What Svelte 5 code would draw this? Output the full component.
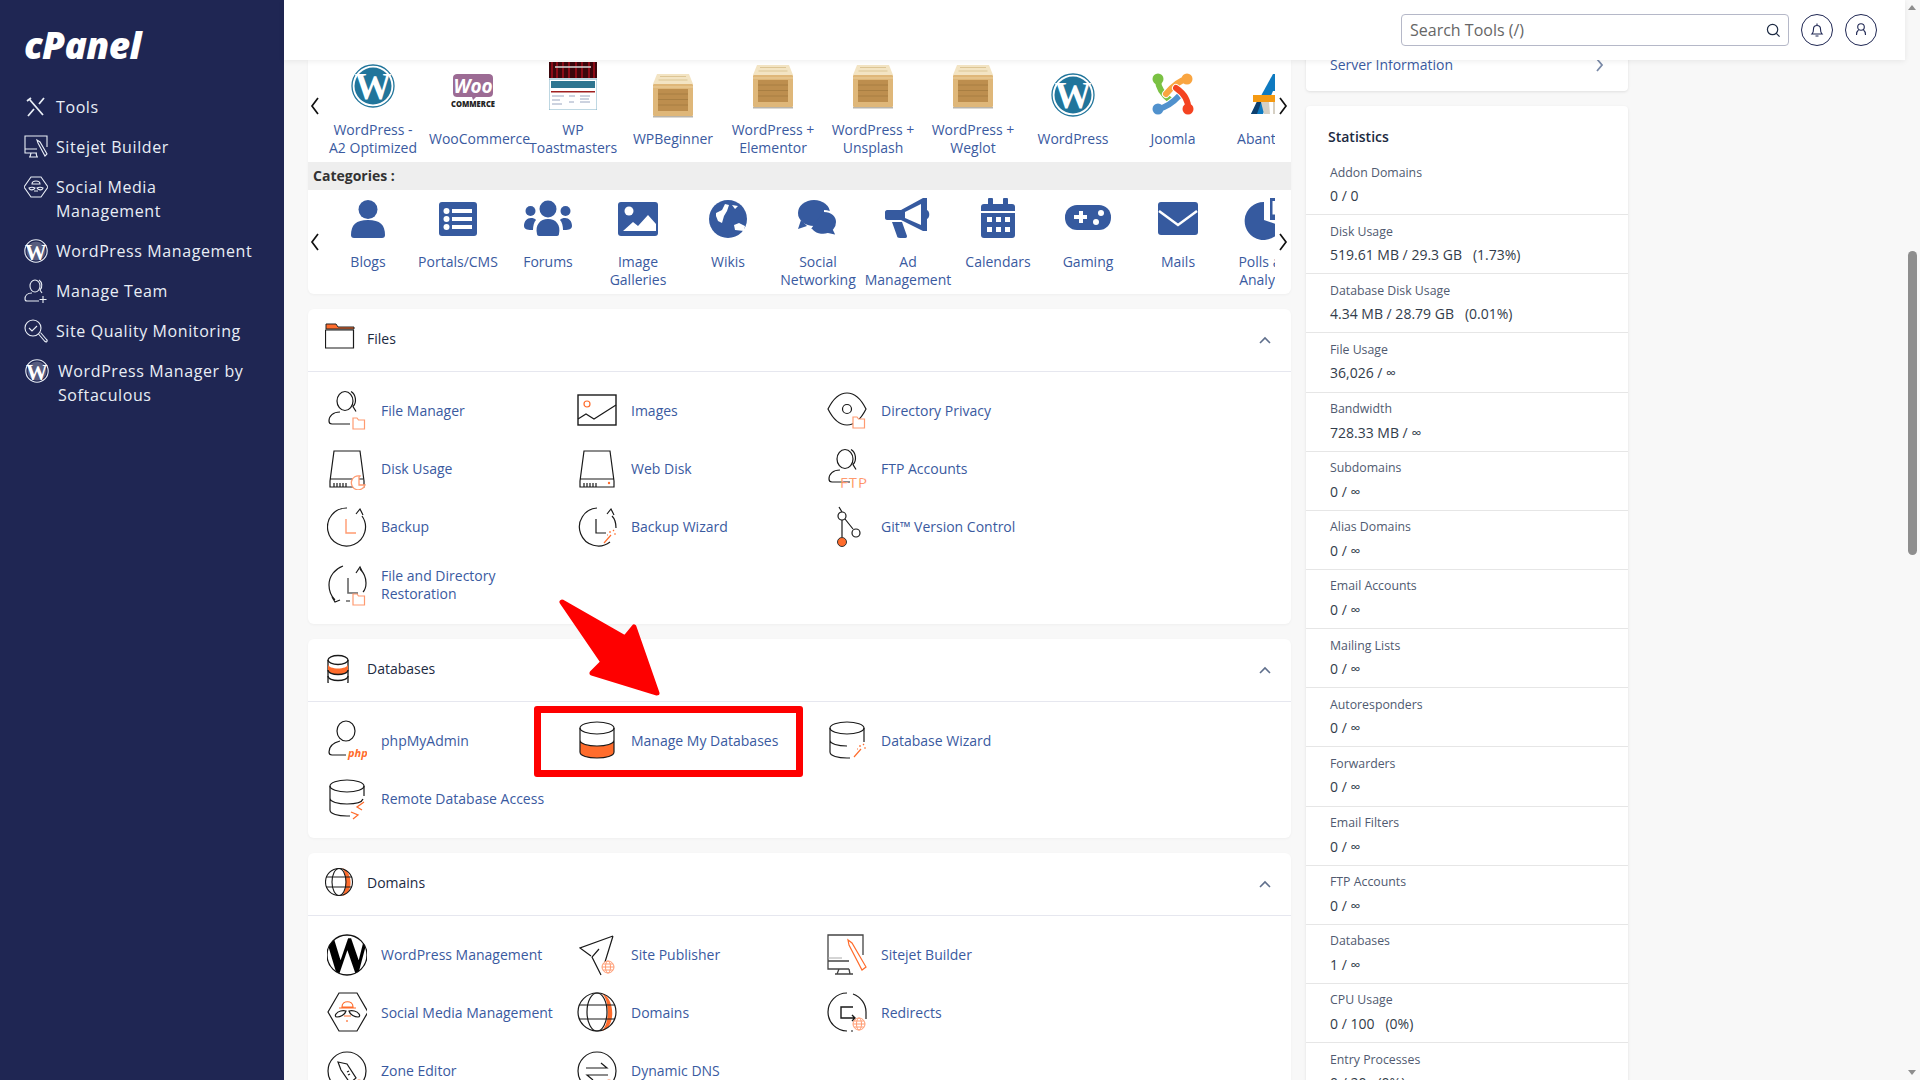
<script>
  const O = "#ff6c2c";
  const P = "#ff9a70";
  const K = 'stroke="#1a1a1a" stroke-width="1.2" fill="none"';

  const folderMini = (x, y) =>
    `<path d="M${x} ${y}h4l1.5 2h6v9h-11.500z" stroke="${P}" stroke-width="1.2" fill="#fff"/>`;
  const globeMini = (x, y) =>
    `<g stroke="${P}" stroke-width="1" fill="#fff"><circle cx="${x}" cy="${y}" r="6"/><ellipse cx="${x}" cy="${y}" rx="2.500" ry="6"/><path d="M${x - 6} ${y}h12M${x - 5} ${y - 3}h10M${x - 5} ${y + 3}h10"/></g>`;
  const person = `<g ${K}><ellipse cx="18" cy="11" rx="8" ry="9.500"/><path d="M24 1.500c5 3 6 11 2 15l3 5M13 22c-7 0-11 4-11 9 0 2 1 3 3 3h18"/></g>`;
  const cylinder = `<g ${K}><ellipse cx="20" cy="8" rx="17" ry="6"/><path d="M3 8v24c0 4 8 6 17 6s17-2 17-6V8M3 20c0 4 8 6 17 6s17-2 17-6"/></g>`;
  const wand = (c) =>
    `<path d="M27 37l7-8" stroke="${c}" stroke-width="1.200"/><path d="M33 25v2M37 28h2M36 24l1 1M30 29h1" stroke="${c}" stroke-width="1.200"/>`;

  const icons = {
    fileManager: person + folderMini(26, 28),
    images: `<g ${K}><rect x="1" y="5" width="38" height="30" stroke-width="1.400"/><path d="M1 29l8-5 8 5 22-14"/></g><circle cx="10" cy="14" r="3" stroke="${O}" stroke-width="1.200" fill="none"/>`,
    privacy: `<g ${K}><path d="M1 19C6 9 13 3 20 3s14 6 19 16c-5 10-12 16-19 16S6 29 1 19z"/><circle cx="20" cy="19" r="4.500"/></g>` + folderMini(26, 27),
    diskUsage: `<g ${K}><path d="M7 3h26l4 30v6H3v-6zM3 31h33M7 35v4M10 35v4M13 35v4M16 35v4M19 35v4"/></g><path d="M33 28a7 7 0 1 0 5 9h-6v-8z" stroke="${P}" stroke-width="1.300" fill="#fff"/>`,
    webDisk: `<g ${K}><path d="M7 3h26l4 30v6H3v-6zM3 31h34M7 35v4M10 35v4M13 35v4M16 35v4M19 35v4"/></g><circle cx="32" cy="35" r="1.200" fill="${O}"/>`,
    ftp: person + `<text x="13" y="40" font-family="Open Sans" font-size="15" letter-spacing="1" fill="${O}" stroke="#fff" stroke-width="0.300">FTP</text>`,
    backup: `<g ${K}><path d="M20 2A19 19 0 1 0 35 10M29 8l4-5 3 6"/></g><path d="M19 13v14h10" stroke="${P}" stroke-width="1.400" fill="none"/>`,
    backupWizard: `<g ${K}><path d="M20 2A19 19 0 1 0 33 36M39 22c0-6-2-10-4-12M30 8l4-5 3 6M19 13v14h10" /></g>` + wand(O),
    git: `<g ${K}><path d="M12 1l3 5M15 14v17M18 13l8 10"/><circle cx="15" cy="10" r="4"/><circle cx="29" cy="27" r="4"/></g><circle cx="15" cy="36" r="4.500" fill="${O}" stroke="#333"/>`,
    restore: `<g ${K}><path d="M16 2C8 5 2 12 2 21c0 6 2 11 6 15M5 33l3 5 5-2M36 28c2-2 3-6 3-9 0-6-3-11-6-14M29 9l4-6 3 6M19 37h4"/></g><path d="M21 14v15h10" stroke="#666" stroke-width="1.600" fill="none"/>` + folderMini(26, 30),
    phpmyadmin: `<g ${K}><ellipse cx="19" cy="11" rx="9" ry="10"/><path d="M13 21c-8 2-11 6-11 11 0 2 1 3 3 3h14"/></g><text x="21" y="37" font-family="Open Sans" font-style="italic" font-weight="700" font-size="11" fill="${O}">php</text>`,
    manageDb: `<path d="M3 20c0 4 8 6 17 6s17-2 17-6v12c0 4-8 6-17 6s-17-2-17-6z" fill="${O}"/>` + cylinder,
    dbWizard: `<g ${K}><ellipse cx="20" cy="8" rx="17" ry="6"/><path d="M3 8v24c0 4 8 6 17 6h3M37 8v14M3 20c0 4 8 6 17 6"/></g>` + wand(O),
    remoteDb: `<g ${K}><ellipse cx="20" cy="8" rx="17" ry="6"/><path d="M3 8v24c0 4 8 6 17 6h3M37 8v10M3 20c0 4 8 6 17 6s15-2 16-5"/></g><path d="M37 24l-7 5 5 3M24 34l7 3-5 4" stroke="${O}" stroke-width="1.300" fill="none"/>`,
    wpBlack: `<clipPath id="wpc"><circle cx="20" cy="21" r="20"/></clipPath><g clip-path="url(#wpc)"><text x="23.500" y="39" text-anchor="middle" font-family="Liberation Serif" font-weight="700" font-size="58" fill="#000" transform="scale(.85 1)">W</text></g><circle cx="20" cy="21" r="20" fill="none" stroke="#111" stroke-width="1.300"/>`,
    publisher: `<g ${K}><path d="M36 2L3 14l11 8M36 2l-8 26M22 15l-7 8 9 18"/></g>` + globeMini(31, 33),
    sitejet: `<g stroke="#444" stroke-width="1.300" fill="none"><path d="M36 21V1H1v34h21M1 27h21M12 35l-2 5M22 35l1 5M8 40h18"/></g><path d="M1 24h14" stroke="#aaa" stroke-width="1"/><path d="M22 11l-1-5 4 3 14 24-4 3z" stroke="${O}" stroke-width="1.200" fill="#fff"/>`,
    social: `<g ${K}><path d="M12 1h18l11 19-11 19H12L1 20z"/><path d="M9 22c2-3 7-4 10-3-1 4-6 6-9 6-2 0-2-2-1-3zM32 22c-2-3-7-4-10-3 1 4 6 6 9 6 2 0 2-2 1-3z"/></g><path d="M15 15c0-7 11-7 11 0zM12 16h17M17 24h7M20 28v2" stroke="${O}" stroke-width="1.200" fill="none"/>`,
    domains: `<path d="M24 1c14 3 16 36 0 38 9-5 9-33 0-38z" fill="${O}"/><g ${K}><circle cx="20" cy="20" r="19"/><ellipse cx="20" cy="20" rx="10" ry="19"/><path d="M2 13h36M2 27h36" /></g>`,
    redirects: `<g ${K}><path d="M20 1a19 19 0 1 0 0 38M26 2c8 3 13 10 13 18v7M24 39h2"/><path d="M26 15H14v11h14M25 23l3 3-3 3" stroke-width="1.400"/></g>` + globeMini(32, 32),
    zone: `<circle cx="20" cy="21" r="19" ${K}/><g ${K}><path d="M11 12l9 2 9 14-6 5-9-13zM11 12l3 8"/><path d="M20 22l2-1M21 25l2-1"/></g>` + globeMini(32, 36),
    ddns: `<circle cx="20" cy="21" r="19" ${K}/><g ${K}><path d="M9 18h21l-6-5M31 25H10l6 5"/></g>` + globeMini(32, 36),
    secFolder: `<path d="M1 6v-5h10l2 3h16v2z" fill="${O}" stroke="#222" stroke-width="1"/><path d="M0.500 7h28v18h-28z" ${K} stroke-width="1.400"/>`,
    secDb: `<g stroke="#1a1a1a" stroke-width="1.300" fill="#fff"><path d="M3 7v22c0 6 20 6 20 0V7"/></g><path d="M3 11c0 6 20 6 20 0v6c0 6-20 6-20 0z" fill="${O}"/><g stroke="#1a1a1a" stroke-width="1.300" fill="none"><ellipse cx="13" cy="7" rx="10" ry="4.500"/><path d="M3 17c0 6 20 6 20 0M3 23c0 6 20 6 20 0"/></g>`,
    secGlobe: `<path d="M17 1c11 3 12 26 0 28 5-5 5-23 0-28z" fill="${O}"/><g stroke="#1a1a1a" stroke-width="1.100" fill="none"><circle cx="14" cy="15" r="13.500"/><ellipse cx="14" cy="15" rx="7" ry="13.500"/><path d="M1 10h26M1 20h26"/></g>`
  };

  const W = "#e9eef6";
  const SW = `stroke="${W}" stroke-width="1.100" fill="none"`;
  const wpNav = `<circle cx="12" cy="12" r="11.200" ${SW}/><circle cx="12" cy="12" r="9.500" fill="#fff" opacity=".25"/><text x="12" y="20.500" text-anchor="middle" font-family="Liberation Serif" font-weight="700" font-size="24" fill="#fff" transform="translate(1.200 0) scale(.9 1)">W</text>`;
  const navIcons = {
    tools: `<g stroke="${W}" stroke-width="1.800" fill="none"><path d="M6 5l13 15M20 3l-5 6M10 14l-6 7M3 6l4-3"/></g>`,
    sitejet: `<g ${SW}><path d="M23 12V1H1v17h12M1 14h12M7 18l-1 4M12 18l1 4M5 22h9"/><path d="M14 8l-1-3 3 2 7 12-2 2z"/></g>`,
    social: `<g ${SW}><path d="M7 2h10l7 10-7 10H7L0 12z"/><path d="M5 13c2-1 4-1 6 0-1 2-5 3-6 0zM19 13c-2-1-4-1-6 0 1 2 5 3 6 0zM8 9c0-4 8-4 8 0zM10 16h4"/></g>`,
    wp: wpNav,
    team: `<g ${SW} stroke-width="1.300"><ellipse cx="11" cy="7" rx="5" ry="6"/><path d="M15 1c3 2 4 7 1 10l2 3M8 14c-5 0-7 3-7 6 0 2 1 2 2 2h12M19 17v7M15.500 20.500h7"/></g>`,
    quality: `<g ${SW} stroke-width="1.300"><circle cx="9" cy="9" r="8"/><path d="M5 9l3 3 5-5M14.500 15l6 7c2 2 3.500 0 2-1.500l-6-7"/></g>`
  };

  const nav = [
    { label: "Tools", icon: "tools" },
    { label: "Sitejet Builder", icon: "sitejet" },
    { label: "Social Media Management", icon: "social" },
    { label: "WordPress Management", icon: "wp" },
    { label: "Manage Team", icon: "team" },
    { label: "Site Quality Monitoring", icon: "quality" },
    { label: "WordPress Manager by Softaculous", icon: "wp", shift: true }
  ];

  const scripts = [
    { name: "WordPress - A2 Optimized", art: "wp" },
    { name: "WooCommerce", art: "woo" },
    { name: "WP Toastmasters", art: "toast" },
    { name: "WPBeginner", art: "crate" },
    { name: "WordPress + Elementor", art: "crate" },
    { name: "WordPress + Unsplash", art: "crate" },
    { name: "WordPress + Weglot", art: "crate" },
    { name: "WordPress", art: "wp" },
    { name: "Joomla", art: "joomla" },
    { name: "Abantecart", art: "abante" }
  ];

  const categories = [
    { name: "Blogs", svg: `<circle cx="24" cy="11.500" r="9.500"/><path d="M7 37c0-10 5-15 17-15s17 5 17 15c0 2-1 3-3 3H10c-2 0-3-1-3-3z"/>` },
    { name: "Portals/CMS", svg: `<rect x="5" y="4" width="38" height="34" rx="3"/><g fill="#fff"><circle cx="12.500" cy="13" r="3"/><circle cx="12.500" cy="21" r="3"/><circle cx="12.500" cy="29" r="3"/><rect x="18" y="11" width="20" height="4"/><rect x="18" y="19" width="20" height="4"/><rect x="18" y="27" width="20" height="4"/></g>` },
    { name: "Forums", svg: `<circle cx="24" cy="11" r="8.500"/><path d="M13 36c-2-9 3-15 11-15s13 6 11 15c0 1-1 2-2 2H15c-1 0-2-1-2-2z"/><circle cx="6.500" cy="13" r="5"/><circle cx="41.500" cy="13" r="5"/><path d="M0 28c0-5 3-8 7-8 2 0 4 .500 5 2-2 2-3 6-3 10-4 0-9 0-9-4zM48 28c0-5-3-8-7-8-2 0-4 .500-5 2 2 2 3 6 3 10 4 0 9 0 9-4z"/>` },
    { name: "Image Galleries", svg: `<rect x="4" y="4" width="40" height="34" rx="3"/><circle cx="15" cy="13" r="4.500" fill="#fff"/><path d="M9 33l10-9 5 4 10-11 8 9v7z" fill="#fff"/>` },
    { name: "Wikis", svg: `<circle cx="24" cy="21" r="19"/><path d="M12 15l6-3 3-6 4 1-2 6-3 5-2 7-4-2-2-5zM30 27l5-2 6 3-1 5-9-1zM28 7l6 1-3 3z" fill="#fff"/>` },
    { name: "Social Networking", svg: `<ellipse cx="20" cy="15" rx="16" ry="13"/><path d="M7 22l-3 9 9-3z"/><path d="M30 13c8 0 13 5 13 11 0 4-1 6-3 8l3 6-9-2c-6 2-14 0-17-5" stroke="#fff" stroke-width="2"/>` },
    { name: "Ad Management", svg: `<path d="M3 12h14l22-12h4v33h-4l-22-11v0H3c-1 0-2-1-2-2v-6c0-1 1-2 2-2z"/><path d="M8 24h10l5 14c0 2-1 2-3 2h-4c-2 0-3-1-3-2z"/><path d="M37 6L21 14v6l16 7z" fill="#fff"/><path d="M43 12c3 1 3 8 0 9z"/>` },
    { name: "Calendars", svg: `<rect x="7" y="6" width="34" height="34" rx="3"/><rect x="14" y="0" width="5" height="9" rx="1"/><rect x="29" y="0" width="5" height="9" rx="1"/><path d="M7 14h34" stroke="#fff" stroke-width="2"/><g fill="#fff"><rect x="13" y="19" width="5" height="5"/><rect x="22" y="19" width="5" height="5"/><rect x="31" y="19" width="5" height="5"/><rect x="13" y="29" width="5" height="5"/><rect x="22" y="29" width="5" height="5"/><rect x="31" y="29" width="5" height="5"/></g>` },
    { name: "Gaming", svg: `<rect x="1" y="7" width="46" height="25" rx="12"/><path d="M10 17h5v-4h4v4h4v4h-4v4h-4v-4h-5z" fill="#fff"/><circle cx="37" cy="15" r="3" fill="#fff"/><circle cx="32" cy="24" r="3" fill="#fff"/>` },
    { name: "Mails", svg: `<rect x="4" y="4" width="40" height="33" rx="3"/><path d="M5 13l19 14 19-14" stroke="#fff" stroke-width="2.500" fill="none"/>` },
    { name: "Polls and Analytics", svg: `<path d="M20 4A19 19 0 1 0 38 28L20 22z"/><path d="M26 0h18v22H26z"/><path d="M30 3v12h8" stroke="#fff" stroke-width="3" fill="none"/>` }
  ];

  const sections = [
    {
      title: "Files",
      icon: "secFolder",
      items: [
        ["File Manager", "fileManager"],
        ["Images", "images"],
        ["Directory Privacy", "privacy"],
        ["Disk Usage", "diskUsage"],
        ["Web Disk", "webDisk"],
        ["FTP Accounts", "ftp"],
        ["Backup", "backup"],
        ["Backup Wizard", "backupWizard"],
        ["Git™ Version Control", "git"],
        ["File and Directory Restoration", "restore"]
      ]
    },
    {
      title: "Databases",
      icon: "secDb",
      items: [
        ["phpMyAdmin", "phpmyadmin"],
        ["Manage My Databases", "manageDb"],
        ["Database Wizard", "dbWizard"],
        ["Remote Database Access", "remoteDb"]
      ]
    },
    {
      title: "Domains",
      icon: "secGlobe",
      items: [
        ["WordPress Management", "wpBlack"],
        ["Site Publisher", "publisher"],
        ["Sitejet Builder", "sitejet"],
        ["Social Media Management", "social"],
        ["Domains", "domains"],
        ["Redirects", "redirects"],
        ["Zone Editor", "zone"],
        ["Dynamic DNS", "ddns"]
      ]
    }
  ];

  const stats = [
    ["Addon Domains", "0 / 0"],
    ["Disk Usage", "519.61 MB / 29.3 GB", "(1.73%)"],
    ["Database Disk Usage", "4.34 MB / 28.79 GB", "(0.01%)"],
    ["File Usage", "36,026 / ∞"],
    ["Bandwidth", "728.33 MB / ∞"],
    ["Subdomains", "0 / ∞"],
    ["Alias Domains", "0 / ∞"],
    ["Email Accounts", "0 / ∞"],
    ["Mailing Lists", "0 / ∞"],
    ["Autoresponders", "0 / ∞"],
    ["Forwarders", "0 / ∞"],
    ["Email Filters", "0 / ∞"],
    ["FTP Accounts", "0 / ∞"],
    ["Databases", "1 / ∞"],
    ["CPU Usage", "0 / 100", "(0%)"],
    ["Entry Processes", "0 / 20", "(0%)"]
  ];
</script>

{#snippet chevron(dir)}
  <svg class="arrow {dir}" viewBox="0 0 10 18" width="10" height="18">
    <path d={dir === "prev" ? "M8 1L2 9l6 8" : "M2 1l6 8-6 8"} fill="none" stroke="#111" stroke-width="1.700" />
  </svg>
{/snippet}

{#snippet crate()}
  <svg viewBox="0 0 48 48" width="48" height="48">
    <path d="M8 3h32l4 10H4z" fill="#f3e4c3" />
    <path d="M11 5.500h26M9.500 9h29" stroke="#dcc595" stroke-width="1.200" />
    <rect x="4" y="13" width="40" height="32" rx="1" fill="#dfb779" />
    <rect x="9" y="18" width="30" height="22" fill="#bd8e4e" />
    <path d="M9 23h30M9 28.500h30M9 34h30" stroke="#a87e42" stroke-width="1" />
    <path d="M4 16h40" stroke="#ecd09e" stroke-width="1" />
    <rect x="4" y="45" width="40" height="1.500" fill="#b9b4aa" />
  </svg>
{/snippet}

{#snippet art(name)}
  {#if name === "wp"}
    <svg viewBox="0 0 48 48" width="48" height="48">
      <circle cx="24" cy="24" r="21" fill="#fff" stroke="#21759b" stroke-width="1.300" />
      <circle cx="24" cy="24" r="18.500" fill="#21759b" />
      <text x="24" y="37" text-anchor="middle" font-family="Liberation Serif" font-weight="700" font-size="37" fill="#fff">W</text>
    </svg>
  {:else if name === "woo"}
    <svg viewBox="0 0 48 48" width="48" height="48">
      <path d="M8 3h32c2 0 4 1 4 4v15c0 3-2 4-4 4H27l-3 3-1-3H8c-2 0-4-1-4-4V7c0-3 2-4 4-4z" fill="#9c6b94" />
      <text x="24" y="22" text-anchor="middle" font-family="Open Sans" font-style="italic" font-weight="700" font-size="19" fill="#fff">Woo</text>
      <text x="24" y="36" text-anchor="middle" font-family="Open Sans" font-weight="800" font-size="8.500" textLength="44" lengthAdjust="spacingAndGlyphs" fill="#222">COMMERCE</text>
    </svg>
  {:else if name === "toast"}
    <svg viewBox="0 0 48 48" width="48" height="48">
      <rect width="48" height="16" fill="#3a060c" />
      <path d="M3 0v16M8 0v16M14 0v16M20 0v16M27 0v16M33 0v16M40 0v16M45 0v16" stroke="#a80c1a" stroke-width="1.500" />
      <path d="M6 5h36" stroke="#d8d8d8" stroke-width="1.500" />
      <rect x="0" y="17" width="48" height="31" fill="#fff" stroke="#7fb0c6" stroke-width="1" />
      <rect x="2" y="19" width="44" height="7" fill="#2f7590" />
      <rect x="2" y="29" width="44" height="1.500" fill="#a02020" />
      <path d="M3 34h12M3 38h8M3 42h10M20 34h6M20 40h5M31 34h10M31 37h9M31 40h10" stroke="#9aa6c0" stroke-width="1" />
    </svg>
  {:else if name === "crate"}
    {@render crate()}
  {:else if name === "joomla"}
    <svg viewBox="0 0 48 48" width="48" height="48" fill="none" stroke-linecap="round">
      <path d="M9 9Q9 20 22 30" stroke="#7ac143" stroke-width="6" />
      <circle cx="9" cy="8" r="5.500" fill="#7ac143" />
      <path d="M38 8Q28 10 17 23" stroke="#fff" stroke-width="8" />
      <path d="M38 8Q28 10 17 23" stroke="#f9a541" stroke-width="6" />
      <circle cx="38" cy="8" r="5.500" fill="#f9a541" />
      <path d="M9 38Q20 36 31 24" stroke="#fff" stroke-width="8" />
      <path d="M9 38Q20 36 31 24" stroke="#5091cd" stroke-width="6" />
      <circle cx="9" cy="38" r="5.500" fill="#5091cd" />
      <path d="M27 17Q40 26 39 38" stroke="#fff" stroke-width="8" />
      <path d="M27 17Q40 26 39 38" stroke="#f44321" stroke-width="6" />
      <circle cx="39" cy="38" r="5.500" fill="#f44321" />
    </svg>
  {:else}
    <svg viewBox="0 0 48 48" width="48" height="48">
      <path d="M24 3h19v40H2z" fill="#0f7ac0" />
      <path d="M14 43L24 20h8v23z" fill="#fff" />
      <path d="M2 43l8-17h4L8 43z" fill="#0d3f6e" />
      <rect x="4" y="24" width="40" height="7" fill="#f59a12" />
      <path d="M12 31l3 12h6l-1-12zM24 31v12h7V31z" fill="#d6d0c4" />
    </svg>
  {/if}
{/snippet}

<div class="page">
  <aside class="sidebar">
    <div class="logo">cPanel</div>
    <nav>
      {#each nav as n}
        <div class="nav-item" class:shift={n.shift}>
          <svg viewBox="0 0 24 24" width="24" height="24">{@html navIcons[n.icon]}</svg>
          <span>{n.label}</span>
        </div>
      {/each}
    </nav>
  </aside>

  <div class="main">
    <header>
      <div class="search">
        <span>Search Tools (/)</span>
        <svg viewBox="0 0 16 16" width="15" height="15" fill="none" stroke="#1d2b44" stroke-width="1.300">
          <circle cx="7" cy="7" r="5.500" />
          <path d="M11 11l3.500 3.500" />
        </svg>
      </div>
      <div class="round">
        <svg viewBox="0 0 16 16" width="16" height="16" fill="none" stroke="#1f2753" stroke-width="1.100">
          <path d="M3 12c1-1 1.500-2 1.500-5a3.500 3.500 0 0 1 7 0c0 3 .5 4 1.500 5zM8 1.500v2M6.500 14h3" />
        </svg>
      </div>
      <div class="round">
        <svg viewBox="0 0 16 16" width="16" height="16" fill="none" stroke="#1f2753" stroke-width="1.100">
          <circle cx="8" cy="5" r="3.300" />
          <path d="M5.500 8c-1.500 1-2 3-2 5M10.500 8c1.500 1 2 3 2 5" />
        </svg>
      </div>
    </header>

    <div class="content">
      <section class="left">
        <div class="installer">
          <div class="carousel scripts">
            {@render chevron("prev")}
            <div class="track">
              {#each scripts as s}
                <div class="script">
                  {@render art(s.art)}
                  <span>{s.name}</span>
                </div>
              {/each}
            </div>
            {@render chevron("next")}
          </div>
          <div class="cat-bar">Categories :</div>
          <div class="carousel cats">
            {@render chevron("prev")}
            <div class="track">
              {#each categories as c}
                <div class="cat">
                  <svg viewBox="0 0 48 42" width="48" height="42" fill="#365a9f">{@html c.svg}</svg>
                  <span>{c.name}</span>
                </div>
              {/each}
            </div>
            {@render chevron("next")}
          </div>
        </div>

        {#each sections as sec}
          <div class="card">
            <div class="card-head">
              <svg viewBox="0 0 30 30" width="30" height="30">{@html icons[sec.icon]}</svg>
              <span>{sec.title}</span>
              <svg class="collapse" viewBox="0 0 12 8" width="12" height="8">
                <path d="M1 7l5-5 5 5" fill="none" stroke="#5f6f8c" stroke-width="1.600" />
              </svg>
            </div>
            <div class="card-body">
              {#each sec.items as [label, icon]}
                <div class="tool">
                  <svg viewBox="0 0 40 42" width="40" height="42">{@html icons[icon]}</svg>
                  <span>{label}</span>
                </div>
              {/each}
            </div>
          </div>
        {/each}
      </section>

      <section class="right">
        <div class="panel server">
          <span>Server Information</span>
          <svg viewBox="0 0 8 14" width="8" height="14">
            <path d="M1 1l5 6-5 6" fill="none" stroke="#7a8aa8" stroke-width="1.800" />
          </svg>
        </div>
        <div class="panel">
          <h3>Statistics</h3>
          {#each stats as [label, value, pct]}
            <div class="stat">
              <div class="stat-label">{label}</div>
              <div class="stat-value">{value}{#if pct}<span class="pct">{pct}</span>{/if}</div>
            </div>
          {/each}
        </div>
      </section>
    </div>
  </div>

  <div class="scrollbar">
    <span class="tri up"></span>
    <div class="thumb"></div>
    <span class="tri down"></span>
  </div>

  <!-- annotation drawn over the screenshot -->
  <div class="mark-box"></div>
  <svg class="mark-arrow" viewBox="0 0 110 105" width="110" height="105">
    <path d="M7 7L70 43 79 32 102 98 37 78 48 67z" fill="#fe0000" stroke="#fe0000" stroke-width="5" stroke-linejoin="round" />
  </svg>
</div>

<style>
  :global(body) {
    margin: 0;
    background: #f8f8f8;
    font-family: "Open Sans", "Noto Sans", sans-serif;
  }

  .page {
    position: relative;
    display: flex;
    width: 1920px;
    height: 1080px;
    overflow: hidden;
  }

  .sidebar {
    width: 284px;
    flex: none;
    background: #1f2653;
    color: #e9eef6;
  }

  .logo {
    margin: 23px 0 0 24px;
    height: 46px;
    font-family: "Open Sans", sans-serif;
    font-size: 37px;
    font-weight: 800;
    font-style: italic;
    line-height: 44px;
    letter-spacing: -0.6px;
    color: #fff;
  }

  nav {
    margin-top: 26px;
  }

  .nav-item {
    display: flex;
    gap: 8px;
    padding: 0 24px;
    margin-bottom: 16px;
    font-size: 16px;
    line-height: 24px;
    letter-spacing: 0.6px;
  }

  .nav-item svg {
    flex: none;
  }

  .nav-item.shift {
    padding-left: 25px;
    gap: 9px;
  }

  .main {
    flex: 1;
    min-width: 0;
    display: flex;
    flex-direction: column;
  }

  header {
    position: relative;
    z-index: 2;
    flex: none;
    height: 60px;
    box-sizing: border-box;
    padding: 14px 28px 0 0;
    display: flex;
    justify-content: flex-end;
    gap: 12px;
    background: #fff;
    box-shadow: 0 1px 6px rgba(0, 0, 0, 0.08);
  }

  .search {
    width: 388px;
    height: 32px;
    box-sizing: border-box;
    padding: 0 7px 0 8px;
    display: flex;
    align-items: center;
    justify-content: space-between;
    border: 1px solid #b5b8c8;
    border-radius: 4px;
    font-size: 16px;
    line-height: 26px;
    color: #666;
  }

  .search span {
    margin-top: -1px;
  }

  .round {
    width: 32px;
    height: 32px;
    box-sizing: border-box;
    border: 1px solid #1f2753;
    border-radius: 50%;
    display: flex;
    align-items: center;
    justify-content: center;
  }

  .content {
    flex: 1;
    min-height: 0;
    padding-left: 24px;
    display: flex;
    gap: 15px;
    align-items: flex-start;
  }

  .left {
    width: 983px;
    flex: none;
  }

  .right {
    width: 322px;
    flex: none;
  }

  .installer {
    background: #fff;
    border-radius: 0 0 6px 6px;
    box-shadow: 0 1px 3px rgba(0, 0, 0, 0.04);
    margin-bottom: 15px;
  }

  .carousel {
    position: relative;
    padding-left: 15px;
    padding-right: 16px;
  }

  .track {
    display: flex;
    overflow: hidden;
    height: 100%;
  }

  .scripts {
    height: 102px;
    box-sizing: border-box;
    padding-bottom: 4px;
  }

  .script {
    flex: none;
    width: 100px;
    box-sizing: border-box;
    padding: 0 6px;
    display: flex;
    flex-direction: column;
    align-items: center;
    justify-content: center;
    gap: 11px;
  }

  .script span,
  .cat span {
    align-self: stretch;
    text-align: center;
    font-size: 14px;
    line-height: 18px;
    color: #3a5a9f;
  }

  .script svg {
    flex: none;
  }

  .cat-bar {
    height: 28px;
    padding-left: 5px;
    background: #eee;
    font-size: 14px;
    font-weight: 700;
    line-height: 28px;
    color: #333;
  }

  .cats {
    height: 104px;
  }

  .cat {
    flex: none;
    width: 90px;
    padding-top: 8px;
    box-sizing: border-box;
    display: flex;
    flex-direction: column;
    align-items: center;
    gap: 13px;
  }

  .cat svg {
    flex: none;
  }

  .arrow {
    position: absolute;
    top: 37px;
    z-index: 1;
  }

  .cats .arrow {
    top: 43px;
  }

  .arrow.prev {
    left: 2px;
  }

  .arrow.next {
    right: 3px;
  }

  .card {
    margin-bottom: 15px;
    background: #fff;
    border-radius: 6px;
    box-shadow: 0 1px 3px rgba(0, 0, 0, 0.04);
  }

  .card-head {
    height: 63px;
    box-sizing: border-box;
    padding: 0 20px 4px 17px;
    display: flex;
    align-items: center;
    gap: 12px;
    border-bottom: 1px solid #e6e7ef;
    font-size: 14px;
    color: #1c2a3f;
  }

  .collapse {
    margin-left: auto;
    margin-top: 4px;
  }

  .card-body {
    padding: 10px 0 10px 19px;
    display: grid;
    grid-template-columns: repeat(3, 250px);
    grid-auto-rows: 58px;
  }

  .tool {
    display: flex;
    align-items: center;
    gap: 14px;
    font-size: 14px;
    line-height: 18px;
    color: #3a5a9f;
  }

  .tool svg {
    flex: none;
  }

  .tool span {
    max-width: 190px;
  }

  .panel {
    background: #fff;
    border-radius: 4px;
    box-shadow: 0 1px 3px rgba(0, 0, 0, 0.1);
    margin-bottom: 15px;
  }

  .server {
    margin-top: -9px;
    padding: 5px 24px 17px 24px;
    display: flex;
    align-items: center;
    justify-content: space-between;
    font-size: 14px;
    line-height: 18px;
    color: #3a5a9f;
  }

  h3 {
    margin: 0;
    padding: 22px 0 10px 22px;
    font-size: 14px;
    font-weight: 600;
    line-height: 18px;
    color: #1c2a3f;
  }

  .stat {
    box-sizing: border-box;
    height: 59.15px;
    padding: 7.500px 0 0 24px;
    border-bottom: 1.500px solid #e6e6e6;
  }

  .stat-label {
    font-size: 12.3px;
    line-height: 18px;
    color: #505a70;
  }

  .stat-value {
    margin-top: 5.500px;
    font-size: 14px;
    line-height: 18px;
    color: #323c4a;
  }

  .pct {
    margin-left: 11px;
  }

  .scrollbar {
    position: relative;
    width: 15px;
    flex: none;
    background: #f8f8f8;
  }

  .thumb {
    position: absolute;
    top: 251px;
    left: 3px;
    width: 9px;
    height: 304px;
    border-radius: 5px;
    background: #8e8e8e;
  }

  .tri {
    position: absolute;
    left: 3px;
    border-left: 4.500px solid transparent;
    border-right: 4.500px solid transparent;
  }

  .tri.up {
    top: 5px;
    border-bottom: 5px solid #8e8e8e;
  }

  .tri.down {
    bottom: 5px;
    border-top: 5px solid #8e8e8e;
  }

  .mark-box {
    position: absolute;
    left: 534px;
    top: 706px;
    width: 269px;
    height: 71px;
    box-sizing: border-box;
    border: 7px solid #fe0000;
    border-radius: 3px;
  }

  .mark-arrow {
    position: absolute;
    left: 555px;
    top: 595px;
  }
</style>
